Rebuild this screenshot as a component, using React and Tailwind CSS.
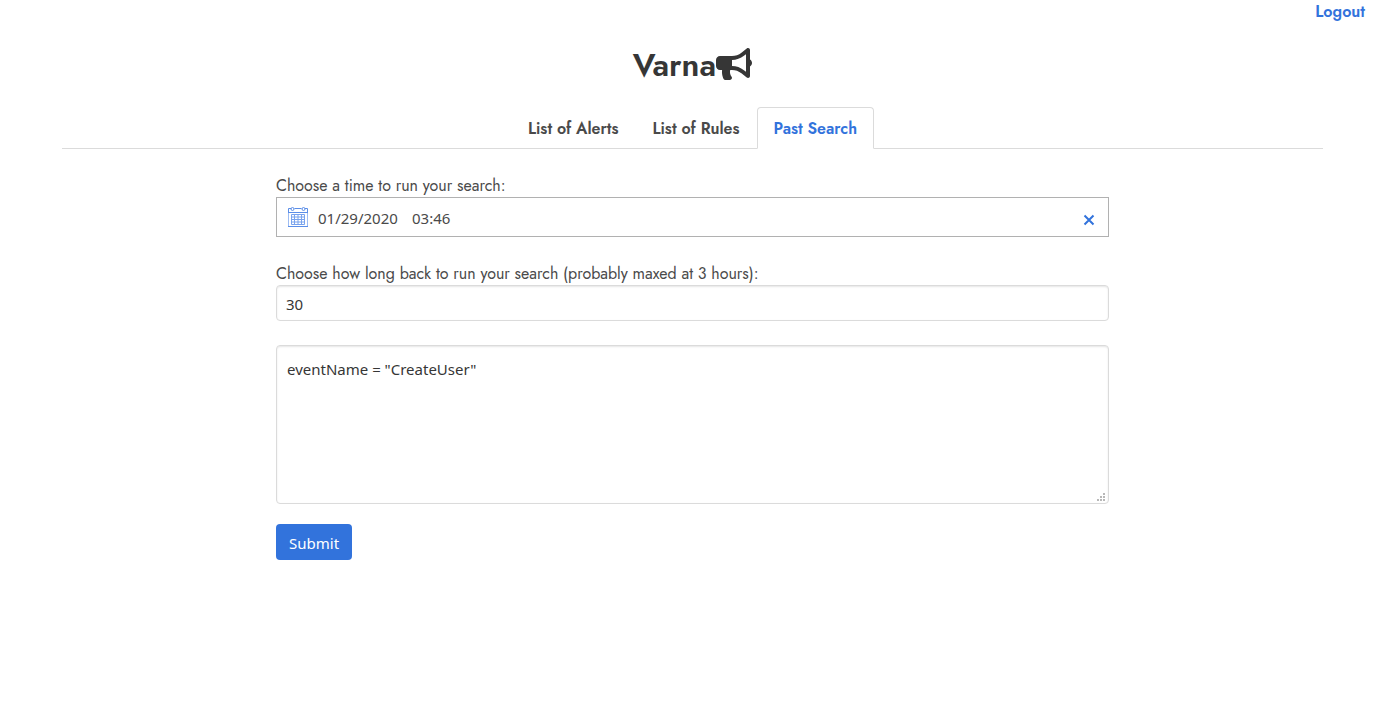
import { useState } from "react";
import { FaBullhorn } from "react-icons/fa";

const tabs = ["List of Alerts", "List of Rules", "Past Search"];

function CalendarIcon() {
  return (
    <svg width="20" height="20" viewBox="0 0 20 20" fill="none" aria-hidden="true">
      <path stroke="#9dbcf3" d="M.5 5V19M19.500 5V19" />
      <path stroke="#5b8ee8" d="M0 19.500H20M0 5.500H20M.5 5.500V1.500H3M6.500 1.500H13.500M17 1.500H19.500V5.500" />
      <circle cx="4.500" cy="2" r="1.500" stroke="#5b8ee8" />
      <circle cx="15.500" cy="2" r="1.500" stroke="#5b8ee8" />
      <path stroke="#79a3ee" d="M3.500 7.500H16.500V17.500H3.500ZM6.500 7.500V17.500M10 7.500V17.500M13.500 7.500V17.500M3.500 10H16.500M3.500 12.500H16.500M3.500 15H16.500" />
    </svg>
  );
}

function ResizeGrip() {
  return (
    <svg className="pointer-events-none absolute right-1 bottom-[3px] size-2" viewBox="0 0 8 8" fill="#b8b8b8" aria-hidden="true">
      <path d="M6 0h2v2h-2zM3 3h2v2h-2zM6 3h2v2h-2zM0 6h2v2h-2zM3 6h2v2h-2zM6 6h2v2h-2z" />
    </svg>
  );
}

export default function App() {
  const [date, setDate] = useState("01/29/2020");
  const [time, setTime] = useState("03:46");
  const [active, setActive] = useState("Past Search");

  return (
    <div className="min-h-screen bg-white font-['Jost','Lato',sans-serif] text-base leading-6 text-[#4a4a4a]">
      <header className="flex justify-end pr-[9px]">
        <a href="#logout" className="font-semibold text-[#3273dc]">Logout</a>
      </header>
      <main className="pr-[51px] pl-[62px]">
        <h1 className="mt-5 flex h-10 items-center justify-center text-[32px] leading-10 font-semibold text-[#363636]">
          <span className="pt-0.5">Varna</span>
          <FaBullhorn className="h-8 w-9" aria-hidden="true" />
        </h1>
        <nav className="mt-[23px] flex justify-center border-b border-[#dbdbdb]">
          {tabs.map((tab) => (
            <a
              key={tab}
              href="#tab"
              onClick={() => setActive(tab)}
              className={
                tab === active
                  ? "-mb-px rounded-t border border-[#dbdbdb] border-b-white bg-white px-4 pt-[9px] pb-[7px] font-semibold text-[#3273dc]"
                  : "-mb-px rounded-t border border-transparent px-4 pt-[9px] pb-[7px] font-semibold"
              }
            >
              {tab}
            </a>
          ))}
        </nav>
        <form className="mx-auto mt-6 max-w-[833px]" onSubmit={(e) => e.preventDefault()}>
          <label htmlFor="date" className="block pt-0.5 leading-[22px]">Choose a time to run your search:</label>
          <div className="flex h-10 items-center border border-[#b1b1b1] pr-[11px] pl-[11px] font-['Noto_Sans',sans-serif] text-[15px]">
            <CalendarIcon />
            <input id="date" className="ml-2.5 w-[94px] pt-0.5 outline-none" value={date} onChange={(e) => setDate(e.target.value)} />
            <input aria-label="Time" className="w-16 pt-0.5 outline-none" value={time} onChange={(e) => setTime(e.target.value)} />
            <button
              type="button"
              aria-label="Clear"
              className="ml-auto p-0.5 pt-1 text-[#3273dc]"
              onClick={() => {
                setDate("");
                setTime("");
              }}
            >
              <svg className="mt-1 size-3" viewBox="0 0 12 12" fill="none" stroke="currentColor" strokeWidth="2" aria-hidden="true">
                <path d="M1.500 1.500L10.500 10.500M10.500 1.500L1.500 10.500" />
              </svg>
            </button>
          </div>
          <label htmlFor="minutes" className="mt-6 block pt-0.5 leading-[22px]">
            Choose how long back to run your search (probably maxed at 3 hours):
          </label>
          <input
            id="minutes"
            defaultValue="30"
            className="block h-9 w-full rounded border border-[#dbdbdb] px-[9px] pt-0.5 font-['Noto_Sans',sans-serif] text-[15px] text-[#363636] shadow-[inset_0_1px_2px_rgba(10,10,10,0.1)] outline-none"
          />
          <div className="relative mt-6">
            <textarea
              aria-label="Search query"
              defaultValue={'eventName = "CreateUser"'}
              className="block h-[159px] w-full resize-none rounded border border-[#dbdbdb] px-2.5 py-[11px] font-['Noto_Sans',sans-serif] text-[15px] leading-6 text-[#363636] shadow-[inset_0_1px_2px_rgba(10,10,10,0.1)] outline-none"
            />
            <ResizeGrip />
          </div>
          <button type="submit" className="mt-5 h-9 rounded bg-[#3273dc] px-[13px] pt-0.5 font-['Noto_Sans',sans-serif] text-[15px] text-white">
            Submit
          </button>
        </form>
      </main>
    </div>
  );
}
